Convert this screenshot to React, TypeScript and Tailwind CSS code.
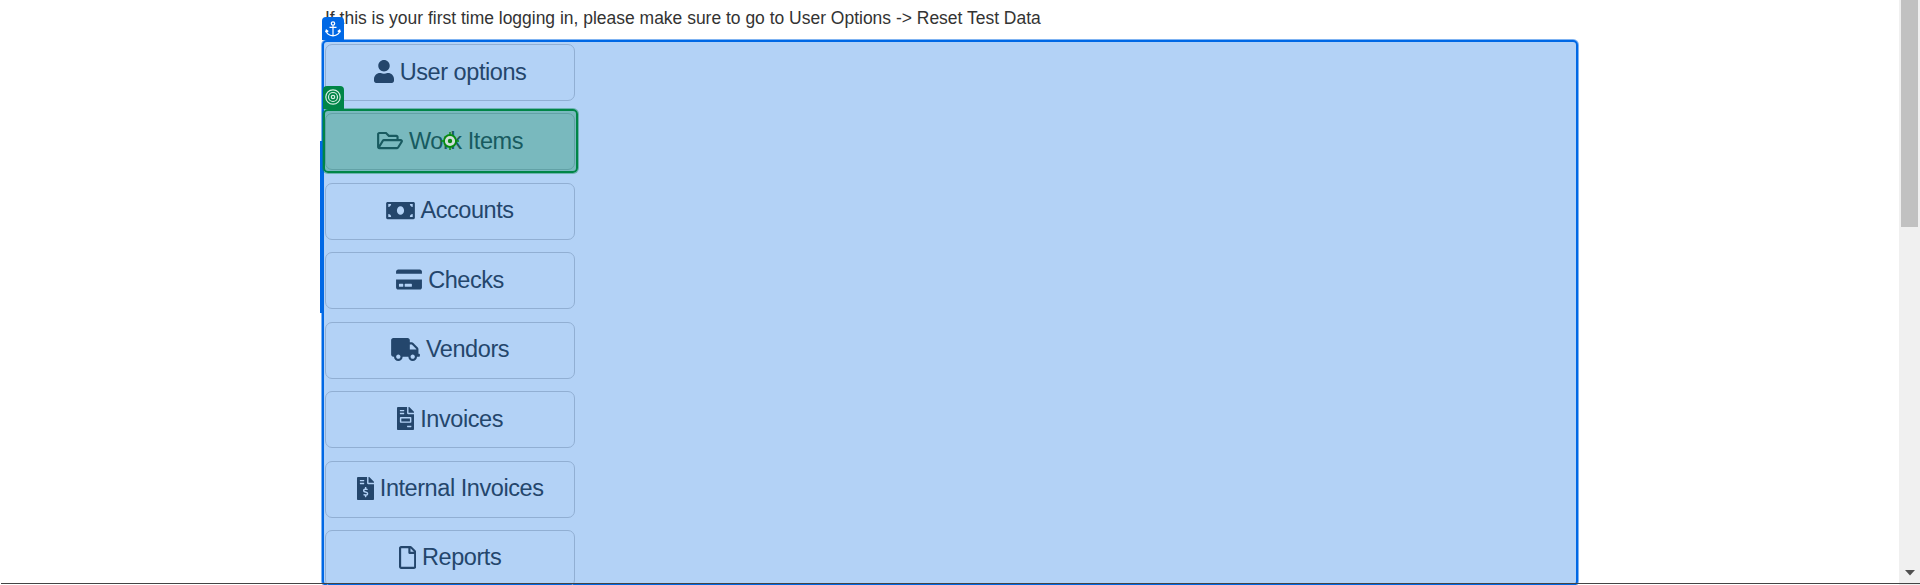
import type { ReactNode } from "react";
import {
  FaUser,
  FaRegFolderOpen,
  FaMoneyBill,
  FaCreditCard,
  FaTruck,
  FaFileInvoice,
  FaFileInvoiceDollar,
  FaRegFile,
} from "react-icons/fa";

const items: { label: string; icon: ReactNode }[] = [
  { label: "User options", icon: <FaUser className="h-[23px] w-[20px]" /> },
  { label: "Work Items", icon: <FaRegFolderOpen className="h-[23px] w-[26px]" /> },
  { label: "Accounts", icon: <FaMoneyBill className="-mr-px h-[23px] w-[29px]" /> },
  { label: "Checks", icon: <FaCreditCard className="h-[23px] w-[26px]" /> },
  { label: "Vendors", icon: <FaTruck className="h-[23px] w-[29px]" /> },
  { label: "Invoices", icon: <FaFileInvoice className="h-[23px] w-[17.250px]" /> },
  { label: "Internal Invoices", icon: <FaFileInvoiceDollar className="h-[23px] w-[17.250px]" /> },
  { label: "Reports", icon: <FaRegFile className="h-[23px] w-[17.250px]" /> },
];

function AnchorBadge() {
  return (
    <div className="absolute left-[322px] top-[17px] flex h-[23px] w-[22px] items-center justify-center rounded-t-[4px] bg-[#0068e5] pr-px">
      <svg viewBox="0 0 16 16" className="h-4 w-4 fill-none stroke-white" strokeWidth="1.2">
        <circle cx="8" cy="2.5" r="1.7" />
        <path d="M8 4.2V15M4.5 6.3h7M1.2 9.3c.3 3.2 3 5.2 6.8 5.6 3.800-.4 6.500-2.400 6.800-5.600M.6 11.200l.7-2.200 2 1.500M15.400 11.200l-.7-2.200-2 1.500" />
      </svg>
    </div>
  );
}

function TargetBadge() {
  return (
    <div className="absolute left-[323px] top-[86px] flex h-[23px] w-[21px] items-center justify-center rounded-t-[4px] bg-[#008547] pb-px pr-[2px]">
      <svg viewBox="0 0 16 16" className="h-4 w-4 shrink-0 fill-none stroke-[#d5eee2]" strokeWidth="1.200">
        <circle cx="8" cy="8" r="7.200" />
        <circle cx="8" cy="8" r="4.500" />
        <circle cx="8" cy="8" r="1.700" />
      </svg>
    </div>
  );
}

export default function App() {
  return (
    <div className="relative flex h-[585px] w-full overflow-hidden bg-white font-['Liberation_Sans',Arial,sans-serif]">
      <main className="w-[1899px] shrink-0 pl-[322px]">
        <p className="h-10 whitespace-nowrap pl-[3px] pt-[5px] text-[17.480px] leading-[27px] text-[#333]">
          If this is your first time logging in, please make sure to go to User Options -&gt; Reset Test Data
        </p>
        <div className="h-[546px] w-[1256px] rounded-[5px] border-2 border-[#0068e5] bg-[#b3d2f6] pl-px pt-[2px] shadow-[0_0_0_1px_#0068e580]">
          <div className="flex h-[541px] flex-col gap-[12.430px] overflow-hidden">
            {items.map((item) => (
              <div
                key={item.label}
                className="flex h-[57px] w-[250px] shrink-0 items-center justify-center gap-[6px] rounded-[7px] border border-[#91afd3] pb-[2px] text-[23.500px] leading-9 tracking-[-0.440px] text-[#24466c]"
              >
                {item.icon}
                <span>{item.label}</span>
              </div>
            ))}
          </div>
        </div>
      </main>
      <aside className="flex w-[21px] shrink-0 flex-col items-center justify-between bg-[#f0f0f0] pb-[9px]">
        <div className="h-[227px] w-[17px] bg-[#c1c1c1]" />
        <svg viewBox="0 0 10 6" className="h-[6px] w-[10px]">
          <path d="M0 0h10L5 5.500z" fill="#505050" />
        </svg>
      </aside>

      <div className="absolute left-[320px] top-[141px] h-[172px] w-[3px] bg-[#0068e5]" />
      <AnchorBadge />
      <TargetBadge />
      <div className="absolute left-[323px] top-[109px] h-[64px] w-[255px] rounded-[5px] border-2 border-[#008547] bg-[#008547]/32 shadow-[0_0_0_1px_#00854766]" />
      <svg viewBox="0 0 18 18" className="absolute left-[441px] top-[132px] h-[18px] w-[18px]">
        <circle cx="9" cy="9" r="6" fill="#cfdfd9" stroke="#078c12" strokeWidth="1.800" />
        <path d="M9 0v4M9 14v4M0 9h4M14 9h4" stroke="#078c12" strokeWidth="1.500" />
        <circle cx="9" cy="9" r="2.200" fill="#078c12" />
      </svg>
      <div className="absolute bottom-px left-px right-0 h-px bg-[#444]" />
    </div>
  );
}
